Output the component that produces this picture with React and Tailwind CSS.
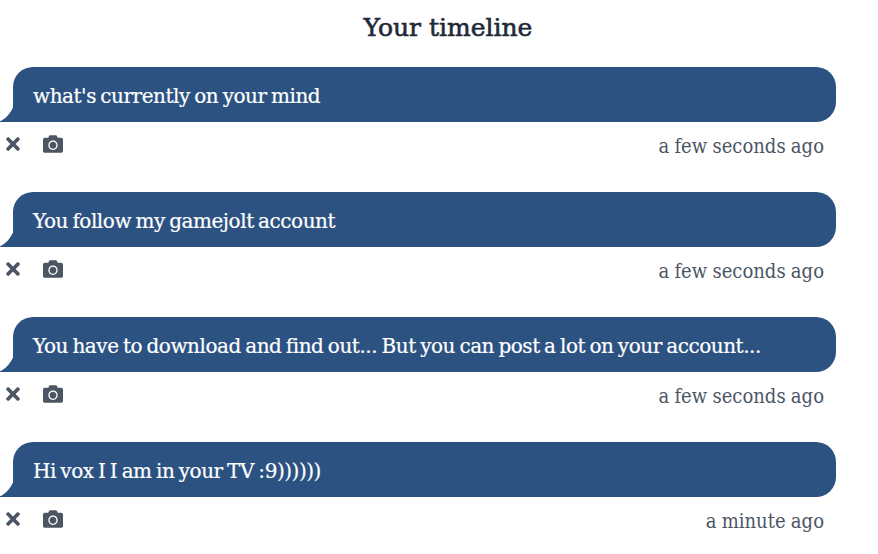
import { FaCamera, FaTimes } from 'react-icons/fa';

const posts = [
  { id: 1, text: "what's currently on your mind", time: 'a few seconds ago' },
  { id: 2, text: 'You follow my gamejolt account', time: 'a few seconds ago' },
  {
    id: 3,
    text: 'You have to download and find out... But you can post a lot on your account...',
    time: 'a few seconds ago',
  },
  { id: 4, text: 'Hi vox I I am in your TV :9))))))', time: 'a minute ago' },
];

const Post = ({ post }) => {
  return (
    <article className="h-[125px]">
      {/* Bubble */}
      <div className="relative ml-[13px] mr-[42px] flex h-[55px] items-center rounded-[20px] rounded-bl-none bg-[#2c5282] px-5 text-white">
        <svg
          className="absolute bottom-0 -left-[13px] h-4 w-3.5 text-[#2c5282]"
          viewBox="0 0 14 16"
          fill="currentColor"
        >
          <path d="M14 0H13V1.5C10.5 7 6 12.5 0 15.3V16H14Z" />
        </svg>
        <p className="whitespace-nowrap pt-0.5 font-['DejaVu_Serif',serif] text-[20px] leading-8 tracking-[-0.46px] [word-spacing:-1.5px] [font-variant-ligatures:common-ligatures] [-webkit-text-stroke:0.2px_white]">
          {post.text}
        </p>
      </div>

      {/* Actions */}
      <div className="flex items-start justify-between pl-1.5 pr-[54px] text-[#4b5563]">
        <div className="flex items-center pt-3">
          <button className="w-3.5">
            <FaTimes className="h-5 w-3.5" />
          </button>
          <button className="ml-[23px]">
            <FaCamera className="h-5 w-5" />
          </button>
        </div>
        <span className="pt-2 text-[20px] leading-8 tracking-[0.02px] [word-spacing:-0.5px]">
          {post.time}
        </span>
      </div>
    </article>
  );
};

export default function App() {
  return (
    <main className="h-[554px] overflow-hidden bg-white font-['DejaVu_Serif_Condensed','DejaVu_Serif',serif]">
      <h1 className="flex h-[67px] items-start justify-center pt-2.5 pl-[18px] font-['DejaVu_Serif',serif] text-[25px] leading-9 text-[#1f2937] [-webkit-text-stroke:0.6px_#1f2937]">
        Your timeline
      </h1>
      {posts.map((post) => (
        <Post key={post.id} post={post} />
      ))}
    </main>
  );
}
